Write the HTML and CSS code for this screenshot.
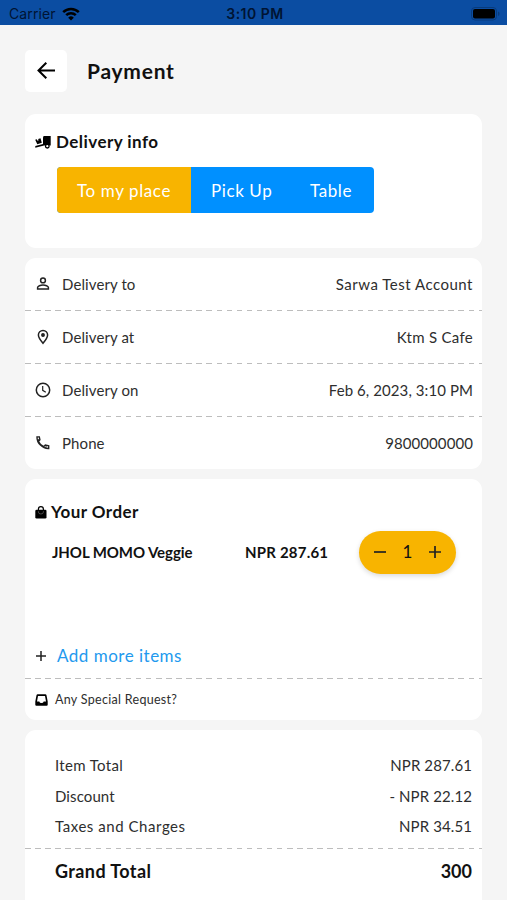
FILE: index.html
```html
<!DOCTYPE html>
<html lang="en">
<head>
    <meta charset="UTF-8">
    <meta name="viewport" content="width=device-width, initial-scale=1.0">
    <title>Payment</title>
    <link rel="stylesheet" href="styles.css">
</head>
<body>
    <div class="status-bar">
        <div class="status-left">
            <span class="carrier">Carrier</span>
            <svg class="wifi" viewBox="0 0 18 14" width="18" height="14">
                <path d="M1.2 5.2a11 11 0 0 1 15.6 0M4.2 8.2a6.8 6.8 0 0 1 9.6 0" fill="none" stroke="#000" stroke-width="2.5"/>
                <path d="M9 13.5L6.2 10.7a4 4 0 0 1 5.6 0z"/>
            </svg>
        </div>
        <span class="time">3:10 PM</span>
        <div class="status-right">
            <svg viewBox="0 0 30 14" width="30" height="14">
                <rect x=".5" y=".5" width="25" height="12.5" rx="3.5" fill="none" stroke="#083b7c"/>
                <rect x="2" y="2" width="22" height="9.5" rx="2"/>
                <path d="M27 4.5v4.5a2.4 2.4 0 0 0 0-4.5z" fill="#083b7c"/>
            </svg>
        </div>
    </div>

    <header class="header">
        <button class="back-btn">
            <svg viewBox="0 0 20 20" width="20" height="20">
                <path d="M19 9.500H2.600M10.300 1.700L2.500 9.500l7.800 7.800" fill="none" stroke="#000" stroke-width="2"/>
            </svg>
        </button>
        <h1 class="title">Payment</h1>
    </header>

    <main class="main">
        <section class="card card-delivery">
            <h2 class="card-title">
                <svg viewBox="0 0 16 13" width="16" height="13">
                    <path d="M9 0h6.700v9.500h-6.700L.3 11.800V10L8 8V2q0-2 1-2z"/>
                    <path d="M.2 3.800l1.500-.6.9 1.600.9-.4-.3-1.500L5.500 2.200l1.300 4.500L2.300 8.200z"/>
                    <circle cx="12.300" cy="10.200" r="1.800" fill="#fff" stroke="#000" stroke-width="1.300"/>
                </svg>
                <span>Delivery info</span>
            </h2>
            <div class="tabs">
                <button class="tab tab-active">To my place</button>
                <button class="tab tab-pickup">Pick Up</button>
                <button class="tab tab-table">Table</button>
            </div>
        </section>

        <section class="card card-details">
            <div class="row dashed">
                <svg viewBox="0 0 18 18" width="18" height="18">
                    <circle cx="9" cy="5.400" r="2.400"/>
                    <path d="M3.600 14.100v-1.500c0-1.500 3-2.600 5.400-2.600s5.400 1.100 5.400 2.600v1.500z"/>
                </svg>
                <span class="label">Delivery to</span>
                <span class="value value-name">Sarwa Test Account</span>
            </div>
            <div class="row dashed">
                <svg viewBox="0 0 18 18" width="18" height="18">
                    <path d="M9 15.300C6.200 12 4.400 9.400 4.400 7a4.600 4.600 0 0 1 9.200 0c0 2.400-1.800 5-4.600 8.300z"/>
                    <circle cx="9" cy="7" r="1.200" fill="#222"/>
                </svg>
                <span class="label">Delivery at</span>
                <span class="value value-place">Ktm S Cafe</span>
            </div>
            <div class="row dashed">
                <svg viewBox="0 0 18 18" width="18" height="18">
                    <circle cx="9" cy="9" r="6.700"/>
                    <path d="M8.700 5v4.300l3.100 1.900" stroke-width="1.200"/>
                </svg>
                <span class="label">Delivery on</span>
                <span class="value">Feb 6, 2023, 3:10 PM</span>
            </div>
            <div class="row row-last">
                <svg viewBox="0 0 18 18" width="18" height="18">
                    <path d="M3 2.900h2.300l.6 2.900-1.600 1.600a11 11 0 0 0 5.400 5.300l1.600-1.600 3.400.8v2.600C8.500 14.800 2.800 9 3 2.900z" stroke-width="1.400"/>
                    <path d="M3.600 6.200l1.800-.9M11.600 14l.6-1.900" stroke-width="1"/>
                </svg>
                <span class="label">Phone</span>
                <span class="value">9800000000</span>
            </div>
        </section>

        <section class="card card-order">
            <h2 class="card-title order-title">
                <svg viewBox="0 0 12 13" width="12" height="13">
                    <rect x=".3" y="3.700" width="11.200" height="8.800" rx="1.300"/>
                    <path d="M3.400 6V3.200a2.500 2.500 0 0 1 5 0V6" fill="none" stroke="#000" stroke-width="1.200"/>
                    <path d="M3.400 5.200v.8a2.500 2 0 0 0 5 0v-.8" fill="none" stroke="#777" stroke-width=".6"/>
                </svg>
                <span>Your Order</span>
            </h2>
            <div class="item">
                <span class="item-name">JHOL MOMO Veggie</span>
                <span class="item-price">NPR 287.61</span>
                <div class="stepper">
                    <button class="step-btn">
                        <svg viewBox="0 0 12 12" width="12" height="12"><path d="M0 6h12" stroke="#222" stroke-width="1.700"/></svg>
                    </button>
                    <span class="count">1</span>
                    <button class="step-btn">
                        <svg viewBox="0 0 12 12" width="12" height="12"><path d="M0 6h12M6 0v12" stroke="#222" stroke-width="1.700"/></svg>
                    </button>
                </div>
            </div>
            <a class="add-more">
                <svg viewBox="0 0 12 12" width="12" height="12"><path d="M1 6h10M6 1v10" stroke="#222" stroke-width="1.500"/></svg>
                <span>Add more items</span>
            </a>
            <div class="request">
                <svg viewBox="0 0 13 12" width="13" height="12">
                    <path fill-rule="evenodd" d="M2.700.3h7.600q1 0 1.200 1l1.200 6.200v3.200q0 1-1 1H1.300q-1 0-1-1V7.500L1.500 1.300Q1.700.3 2.700.3zM3 1.900L2 7.500h2.300q.3 1.500 2.200 1.500t2.200-1.500H11L10 1.900z"/>
                </svg>
                <span>Any Special Request?</span>
            </div>
        </section>

        <section class="card card-total">
            <div class="sums">
                <div class="sum"><span class="sum-item">Item Total</span><span>NPR 287.61</span></div>
                <div class="sum"><span>Discount</span><span>- NPR 22.12</span></div>
                <div class="sum"><span class="sum-taxes">Taxes and Charges</span><span>NPR 34.51</span></div>
            </div>
            <div class="grand">
                <span class="grand-label">Grand Total</span>
                <span>300</span>
            </div>
        </section>
    </main>
</body>
</html>
```
FILE: styles.css
```css
:root {
    --background: #f5f5f5;
    --card: #fff;
    --font: #2e2e2e;
    --heading: #111;
    --status: #0b4da2;
    --yellow: #f8b400;
    --blue: #0090ff;
    --link: #2299ee;
    --dash: #bdbdbd;
}

*,
*::before,
*::after {
    box-sizing: border-box;
    padding: 0;
    margin: 0;
}

body {
    height: 900px;
    overflow: hidden;
    background-color: var(--background);
    color: var(--font);
    font-family: Muli, Lato, sans-serif;
    font-size: 15px;
    line-height: 20px;
    white-space: nowrap;
}

button {
    border: none;
    background: none;
    color: inherit;
    font: inherit;
    letter-spacing: inherit;
    cursor: pointer;
}

svg {
    display: block;
    flex: none;
}

.status-bar {
    display: grid;
    grid-template-columns: 1fr auto 1fr;
    align-items: center;
    height: 25px;
    padding: 2px 6px 0 9px;
    background-color: var(--status);
    color: #001433;
    font-family: Inter, sans-serif;
    font-size: 14px;
}

.status-left {
    display: flex;
    align-items: center;
    gap: 6px;
}

.carrier {
    letter-spacing: 0.1px;
}

.time {
    font-size: 14px;
    font-weight: 600;
    letter-spacing: 0.5px;
}

.status-right {
    display: flex;
    justify-content: flex-end;
}

.header {
    display: flex;
    align-items: center;
    gap: 20px;
    padding: 25px 25px 22px;
}

.back-btn {
    display: flex;
    align-items: center;
    justify-content: center;
    width: 42px;
    height: 42px;
    border-radius: 5px;
    background-color: var(--card);
}

.title {
    color: var(--heading);
    font-size: 21px;
    font-weight: 700;
    letter-spacing: 0.75px;
}

.main {
    display: flex;
    flex-direction: column;
    gap: 10px;
    padding: 0 25px;
}

.card {
    flex: none;
    border-radius: 11px;
    background-color: var(--card);
}

.card-title {
    display: flex;
    align-items: center;
    gap: 5px;
    color: var(--heading);
    font-size: 17px;
    font-weight: 700;
    letter-spacing: 0.45px;
}

.card-delivery {
    height: 134px;
    padding: 18px 10px;
}

.tabs {
    display: flex;
    width: 317px;
    height: 46px;
    margin: 15px 0 0 22px;
    border-radius: 4px;
    overflow: hidden;
    background-color: var(--blue);
    color: #fff;
    font-size: 17px;
    letter-spacing: 0.6px;
}

.tab {
    flex: none;
    padding: 2px 0 0 20px;
    text-align: left;
}

.tab-active {
    width: 134px;
    background-color: var(--yellow);
}

.tab-pickup {
    width: 99px;
}

.row {
    display: flex;
    align-items: center;
    height: 53px;
    padding: 0 9px 2px;
}

.row-last {
    height: 52px;
    padding-bottom: 1px;
}

.row svg {
    margin-right: 10px;
    fill: none;
    stroke: #222;
    stroke-width: 1.5;
}

.label {
    letter-spacing: 0.1px;
}

.value {
    margin-left: auto;
    letter-spacing: 0.08px;
}

.value-name {
    letter-spacing: 0.5px;
}

.value-place {
    letter-spacing: 0.3px;
}

.dashed,
.add-more,
.sums {
    background-image: repeating-linear-gradient(to right, var(--dash) 0 5.5px, transparent 5.5px 10.08px);
    background-position: left bottom;
    background-repeat: no-repeat;
    background-size: 100% 1.5px;
}

.card-order {
    height: 241px;
    padding-top: 23px;
}

.order-title {
    gap: 4px;
    padding-left: 10px;
}

.item {
    display: flex;
    align-items: center;
    height: 42px;
    margin-top: 9px;
    padding-left: 27px;
    color: var(--heading);
    font-weight: 700;
}

.item-name {
    width: 193px;
    letter-spacing: -0.08px;
}

.item-price {
    width: 114px;
    letter-spacing: 0.2px;
}

.stepper {
    display: flex;
    align-items: center;
    justify-content: space-between;
    width: 97px;
    height: 43px;
    padding: 0 15px;
    border-radius: 22px;
    background-color: var(--yellow);
    box-shadow: 0 2px 5px rgba(0, 0, 0, 0.15);
    font-size: 17px;
    font-weight: 400;
}

.add-more {
    display: flex;
    align-items: center;
    gap: 10px;
    height: 50px;
    margin-top: 56px;
    padding: 3px 0 0 10px;
    color: var(--link);
    font-size: 17px;
    letter-spacing: 0.5px;
}

.request {
    display: flex;
    align-items: center;
    gap: 7px;
    height: 40px;
    padding: 1px 0 0 10px;
    font-size: 12.5px;
    letter-spacing: 0.3px;
}

.sums {
    height: 119px;
    padding: 20px 10px 0 30px;
}

.sum {
    display: flex;
    align-items: center;
    justify-content: space-between;
    height: 30.5px;
    letter-spacing: 0.1px;
}

.sum-item {
    letter-spacing: 0.35px;
}

.sum-taxes {
    letter-spacing: 0.55px;
}

.grand {
    display: flex;
    align-items: center;
    justify-content: space-between;
    height: 80px;
    padding: 0 10px 36px 30px;
    color: var(--heading);
    font-size: 18px;
    font-weight: 700;
}

.grand-label {
    letter-spacing: 0.4px;
}
```
